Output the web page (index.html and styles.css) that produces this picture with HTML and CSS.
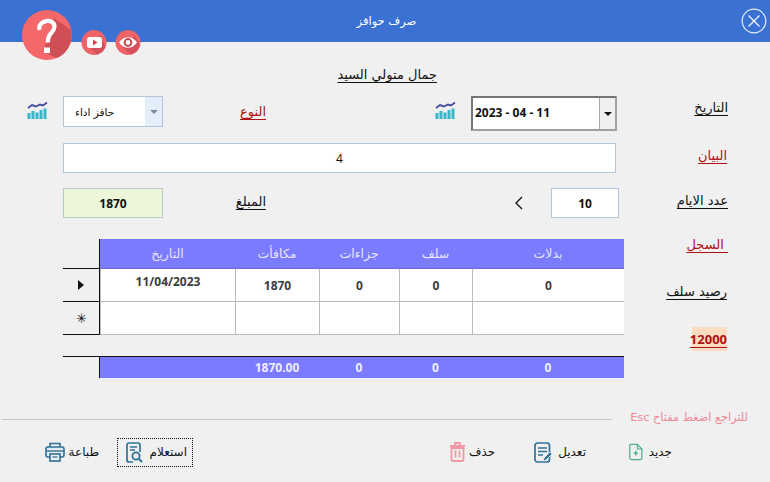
FILE: index.html
```html
<!DOCTYPE html>
<html lang="ar" dir="rtl">
<head>
<meta charset="utf-8">
<title>صرف حوافز</title>
<link rel="stylesheet" href="styles.css">
</head>
<body>
<svg width="0" height="0" class="defs"><defs>
<g id="chart">
<path d="M1 7 L5 4 L9 5.5 L13 3.5 L16 4.5 L20 1.5" fill="none" stroke="#454c9f" stroke-width="1.9"/>
<path d="M0.500 18V12h3v6zM4.500 18V10h3v8zM8.500 18V11.500h3V18zM12.500 18V9h3v9zM16.500 18V7.500h3V18z" fill="#38b6c8"/>
</g>
</defs></svg>
<header class="topbar">
<h1 class="title">صرف حوافز</h1>
<svg class="close" width="26" height="26" viewBox="0 0 26 26"><circle cx="13" cy="13" r="11.800" fill="none" stroke="#e6eefb" stroke-width="1.200"/><path d="M7.500 7.500l11 11M18.500 7.500l-11 11" stroke="#fff" stroke-width="1.100"/></svg>
</header>
<svg class="badges" width="130" height="54" viewBox="0 0 130 54">
<circle cx="26" cy="26" r="25" fill="#f4686a"/>
<path d="M33 9 L50 21 A25 25 0 0 1 36 49 L25 44 L24 36 L31 22z" fill="#cf4f56"/>
<path d="M18.500 21c-2.500-10 15-12.500 15-3.500 0 7-7.500 6-6.500 16" fill="none" stroke="#fff" stroke-width="4.200"/>
<rect x="23" y="38.500" width="6" height="5.500" fill="#fff"/>
<circle cx="73" cy="33.500" r="12.500" fill="#ef6467"/>
<path d="M80 26 L84 39 A12.500 12.500 0 0 1 76 45.500 L68 38z" fill="#d5505a"/>
<rect x="66" y="28" width="15" height="11" rx="2.500" fill="#fff"/>
<path d="M72 30.500l4.500 3-4.500 3z" fill="#d8454b"/>
<circle cx="107" cy="33.500" r="12.500" fill="#ef6467"/>
<path d="M114 27 L119 36 A12.500 12.500 0 0 1 110 45.500 L101 38z" fill="#d5505a"/>
<path d="M98 33.500c5-7 13-7 18 0-5 7-13 7-18 0z" fill="#fff"/>
<circle cx="107" cy="33.500" r="3.400" fill="none" stroke="#c9474e" stroke-width="2"/>
</svg>

<main class="form">
<p class="subject"><span class="ul">جمال متولي السيد</span></p>

<div class="row row-date">
<span class="label w-main"><span class="ul">التاريخ</span></span>
<div class="datebox"><span class="datedrop"><i class="caret dark"></i></span><span class="datetext" dir="ltr">2023 - 04 - 11</span></div>
<svg class="chart gap-a" width="21" height="20" viewBox="0 0 21 20"><use href="#chart"/></svg>
<span class="label red w-type"><span class="ul">النوع</span></span>
<div class="select"><span class="selectdrop"><i class="caret"></i></span><span class="selecttext">حافز اداء</span></div>
<svg class="chart gap-b" width="21" height="20" viewBox="0 0 21 20"><use href="#chart"/></svg>
</div>

<div class="row row-item">
<span class="label red w-item"><span class="ul">البيان</span></span>
<div class="field wide">4</div>
</div>

<div class="row row-days">
<span class="label w-days"><span class="ul">عدد الايام</span></span>
<div class="field days">10</div>
<svg class="chev" width="10" height="14" viewBox="0 0 10 14"><path d="M8 1L2 7l6 6" fill="none" stroke="#111" stroke-width="1.300"/></svg>
<span class="label w-amount"><span class="ul">المبلغ</span></span>
<div class="field amount">1870</div>
</div>

<div class="lower">
<div class="sidelabels">
<span class="label red side-a"><span class="ul">&nbsp;السجل</span></span>
<span class="label side-b"><span class="ul">رصيد سلف</span></span>
<span class="label red side-c"><span class="ul balance">12000</span></span>
</div>
<div class="tablewrap">
<div class="grid head">
<span>بدلات</span><span>سلف</span><span>جزاءات</span><span>مكافأت</span><span>التاريخ</span><span class="gut"></span>
</div>
<div class="grid body">
<span>0</span><span>0</span><span>0</span><span>1870</span><span class="datecell">11/04/2023</span><span class="gut"><i class="arrow"></i></span>
</div>
<div class="grid body">
<span></span><span></span><span></span><span></span><span></span><span class="gut star">✳</span>
</div>
<div class="grid total">
<span>0</span><span>0</span><span>0</span><span>1870.00</span><span></span><span class="gut"></span>
</div>
</div>
</div>

<div class="hint"><span class="hinttext">للتراجع اضغط مفتاح Esc</span><span class="rule"></span></div>

<nav class="actions">
<button class="act a-new"><span>جديد</span>
<svg width="18" height="22" viewBox="0 0 18 22"><path d="M2 1h9l6 6v12a2 2 0 0 1-2 2H3a2 2 0 0 1-2-2V2z" fill="none" stroke="#4caf8a" stroke-width="1.600"/><path d="M11 1v6h6" fill="none" stroke="#4caf8a" stroke-width="1.400"/><path d="M9 9.500v6M6 12.500h6" stroke="#4caf8a" stroke-width="1.800"/></svg></button>
<button class="act a-edit"><span>تعديل</span>
<svg width="19" height="21" viewBox="0 0 19 21"><rect x="1" y="1" width="14.500" height="19" rx="2.500" fill="none" stroke="#2f7099" stroke-width="1.700"/><path d="M4 6h9M4 9.500h9M4 13h5" stroke="#2f7099" stroke-width="1.600"/><path d="M9 19l1-3 6-6 2 2-6 6z" fill="#2f7099" stroke="#f0f0f0" stroke-width=".8"/></svg></button>
<button class="act a-del"><span>حذف</span>
<svg width="17" height="20" viewBox="0 0 17 20"><path d="M1 4h15M6 3V1h5v2" fill="none" stroke="#f598a5" stroke-width="1.800"/><path d="M2.500 6v11a2 2 0 0 0 2 2h8a2 2 0 0 0 2-2V6z" fill="none" stroke="#f598a5" stroke-width="1.800"/><path d="M6.500 8.500v7M10.500 8.500v7" stroke="#f598a5" stroke-width="1.800"/></svg></button>
<button class="act a-query"><span>استعلام</span>
<svg width="18" height="21" viewBox="0 0 18 21"><path d="M7 20H3a2 2 0 0 1-2-2V3a2 2 0 0 1 2-2h9a2 2 0 0 1 2 2v7" fill="none" stroke="#2f7099" stroke-width="1.700"/><path d="M4 5h7M4 8h5" stroke="#2f7099" stroke-width="1.400"/><circle cx="10" cy="14" r="3.600" fill="none" stroke="#2f7099" stroke-width="1.800"/><path d="M12.800 16.800L16 20" stroke="#2f7099" stroke-width="2"/></svg></button>
<button class="act a-print"><span>طباعة</span>
<svg width="20" height="20" viewBox="0 0 20 20"><path d="M5 5V1.500h10V5" fill="none" stroke="#2f7099" stroke-width="1.600"/><path d="M5 15H3a2 2 0 0 1-2-2V7a2 2 0 0 1 2-2h14a2 2 0 0 1 2 2v6a2 2 0 0 1-2 2h-2" fill="#e3eef4" stroke="#2f7099" stroke-width="1.600"/><path d="M1.500 9h17" stroke="#2f7099" stroke-width="1.400"/><rect x="5" y="12" width="10" height="7" fill="#f0f0f0" stroke="#2f7099" stroke-width="1.600"/><path d="M7.500 15h5" stroke="#2f7099" stroke-width="1.300"/></svg></button>
</nav>
</main>
</body>
</html>
```

FILE: styles.css
```css
* { box-sizing: border-box; }
html, body { margin: 0; height: 100%; }
body {
  width: 770px; height: 482px; overflow: hidden; position: relative;
  background: #f0f0f0; color: #111;
  font-family: "DejaVu Sans", "Noto Sans", sans-serif; font-size: 13px;
}
.defs { position: absolute; }
.topbar { height: 42px; background: #3a71d2; display: flex; align-items: center; justify-content: center; position: relative; }
.title { margin: 0 0 0 3px; font-weight: normal; font-size: 11.500px; color: #fff; }
.close { position: absolute; left: 741px; top: 8px; }
.badges { position: absolute; left: 21px; top: 9px; }

.form { padding-right: 42px; }
.ul { text-decoration: underline; text-underline-offset: 3px; }
.subject { margin: 0; height: 54px; padding-top: 25px; padding-right: 291px; line-height: 16px; }
.row { display: flex; align-items: flex-start; }
.label { display: block; line-height: 18px; flex: none; }
.red { color: #b01010; }

.w-main { width: 111px; padding-top: 3px; }
.datebox {
  width: 146px; height: 35px; background: #fff; display: flex; align-items: center;
  border: 2px solid; border-color: #767676 #a0a0a0 #a0a0a0 #767676; flex: none;
}
.datedrop { width: 16px; align-self: stretch; background: #f0f0f0; border-left: 1px solid #aaa; display: flex; align-items: center; justify-content: center; }
.datetext { flex: 1; font: 700 12px "Open Sans", sans-serif; padding: 0 0 3px 2px; text-align: left; }
.caret { display: block; width: 0; height: 0; border: 4px solid transparent; border-top-color: #7a8aa0; border-bottom: 0; }
.caret.dark { border-top-color: #111; }
.gap-a { margin: 5px 15px 0 0; flex: none; }
.w-type { width: 103px; margin-right: 169px; padding-top: 7px; }
.select { width: 100px; height: 31px; background: #fff; border: 1px solid #b4c6dc; display: flex; align-items: center; flex: none; }
.selecttext { flex: 1; padding-left: 11px; font-size: 10.500px; text-align: left; }
.selectdrop { width: 17px; align-self: stretch; background: #e4eefa; display: flex; align-items: center; justify-content: center; }
.gap-b { margin: 5px 15px 0 0; flex: none; }

.row-item { margin-top: 12px; }
.w-item { width: 112px; padding: 4px 1px 0 0; }
.field { background: #fff; border: 1px solid #b4c6dc; display: flex; align-items: center; justify-content: center; flex: none; height: 30px; font: 700 12px "Open Sans", sans-serif; }
.wide { width: 553px; font-weight: 400; }
.row-days { margin-top: 15px; }
.w-days { width: 109px; padding-top: 4px; }
.days { width: 68px; }
.chev { margin: 8px 27px 0 0; flex: none; }
.w-amount { width: 103px; margin-right: 248px; padding-top: 5px; }
.amount { width: 100px; background: #ecf6d8; border-color: #b9c9c9; }

.lower { display: flex; margin-top: 21px; }
.sidelabels { width: 104px; flex: none; display: flex; flex-direction: column; align-items: flex-start; }
.side-a { margin-top: -3px; }
.side-b { margin-top: 29px; padding-right: 1px; }
.side-c { margin-top: 26px; padding-right: 1px; }
.balance { display: block; background: #fcdcc0; font: 700 13px/24px "Open Sans", sans-serif; width: 35px; text-align: center; }
.tablewrap { width: 561px; flex: none; }
.grid { display: grid; grid-template-columns: 152px 73px 80px 84px 135px 37px; }
.grid > span { display: flex; align-items: center; justify-content: center; }
.head { height: 30px; }
.head > span { background: #7b7bff; color: #e6e6ff; font-size: 12.500px; border-bottom: 1px solid #6a6ad8; }
.body { height: 33px; font: 700 12px "Open Sans", sans-serif; color: #3c3c3c; }
.body > span { background: #fff; border-bottom: 1px solid #bcbcbc; border-left: 1px solid #bcbcbc; }
.grid > span.gut { background: transparent; color: #111; border: 0; border-right: 1px solid #111; border-bottom: 1px solid #111; }
.datecell { padding-bottom: 8px; }
.grid > .star { font-size: 13px; font-weight: 400; }
.arrow { display: block; width: 0; height: 0; border: 5.500px solid transparent; border-left: 6px solid #111; border-right: 0; }
.total { height: 22px; margin-top: 21px; font: 700 12px "Open Sans", sans-serif; color: #eef; border-top: 1px solid #111; }
.total > span { background: #7b7bff; }
.total > span.gut { border-bottom: 0; }

.hint { display: flex; align-items: center; margin-top: 31px; margin-right: -20px; height: 16px; }
.hinttext { color: #ee8a96; font-size: 11.300px; width: 136px; flex: none; white-space: nowrap; }
.rule { height: 1px; background: #c4c4c4; width: 610px; flex: none; margin-top: 5px; }

.actions { display: flex; align-items: center; margin-top: 12px; height: 30px; }
.act { display: flex; align-items: center; gap: 6px; background: none; border: 1px solid transparent; padding: 0; font: 12px "DejaVu Sans", sans-serif; color: #111; height: 29px; flex: none; }
.a-new { margin-right: 55px; width: 45px; }
.a-edit { margin-right: 41px; gap: 5px; }
.a-del { margin-right: 37px; gap: 3px; }
.a-query { margin-right: 255px; width: 76px; border: 1px dotted #111; padding-right: 5px; }
.a-print { margin-right: 17px; gap: 4px; }
```
